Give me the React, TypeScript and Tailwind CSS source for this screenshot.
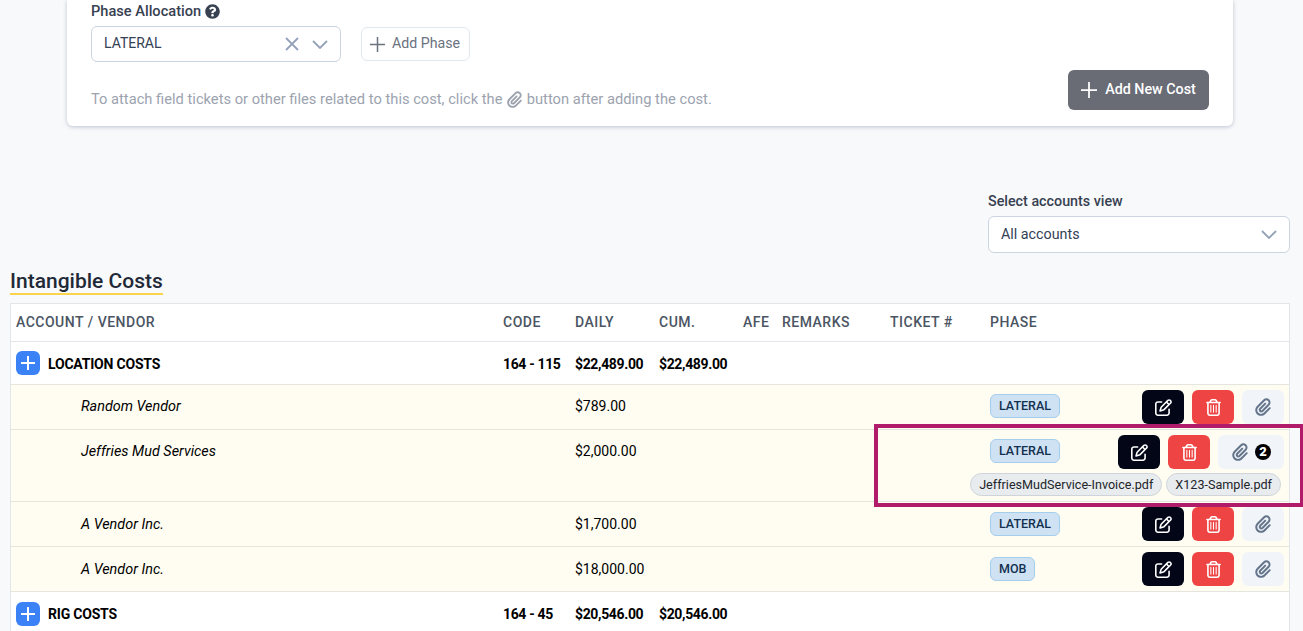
import React from "react";
import { FaQuestionCircle } from "react-icons/fa";
import { FaPaperclip, FaRegPenToSquare, FaRegTrashCan } from "react-icons/fa6";

const PlusI = ({ s = 16, w = 2 }: { s?: number; w?: number }) => (
  <svg width={s} height={s} viewBox={`0 0 ${s} ${s}`} fill="none" stroke="currentColor" strokeWidth={w}>
    <path d={`M${s / 2} 0V${s}M0 ${s / 2}H${s}`} />
  </svg>
);
const Chevron = () => (
  <svg width="16" height="9" viewBox="0 0 16 9" fill="none" stroke="#94a3b8" strokeWidth="1.8">
    <path d="M1 1l7 7 7-7" />
  </svg>
);
const Cross = () => (
  <svg width="14" height="14" viewBox="0 0 14 14" fill="none" stroke="#94a3b8" strokeWidth="1.8">
    <path d="M1 1l12 12M13 1L1 13" />
  </svg>
);

const Actions = ({ count }: { count?: number }) => (
  <div className="flex justify-end gap-2">
    <button className="flex h-[34px] w-[42px] items-center justify-center rounded-md bg-[#020617] text-white">
      <FaRegPenToSquare size={17} />
    </button>
    <button className="flex h-[34px] w-[42px] items-center justify-center rounded-md bg-[#ef4444] text-white">
      <FaRegTrashCan size={17} />
    </button>
    <button className={`flex h-[34px] items-center justify-center gap-[6px] rounded-md bg-[#f1f5f9] text-[#64748b] ${count ? "w-[66px]" : "w-[42px]"}`}>
      <FaPaperclip size={18} />
      {count ? (
        <span className="flex h-4 w-4 items-center justify-center rounded-full bg-black text-[13px] font-black text-white">{count}</span>
      ) : null}
    </button>
  </div>
);

const Badge = ({ children }: { children: React.ReactNode }) => (
  <span className="inline-block rounded-md border border-[#a5cdec] bg-[#cfe2f3] px-[8px] py-[1px] text-[12.5px] leading-[20px] font-medium text-[#12304f]">
    {children}
  </span>
);

const Vendor = ({ name, daily, phase, h, count, files, top = "pt-[11px]", badgeTop = "pt-[4px]" }: { name: string; daily: string; phase: string; h: string; count?: number; files?: string[]; top?: string; badgeTop?: string }) => (
  <div className={`flex border-b border-[#e5e5e0] bg-[#fffdf1] text-[14px] text-black ${h}`}>
    <div className={`w-[564px] shrink-0 pl-[70px] text-[14.4px] leading-[22px] italic ${top}`}>{name}</div>
    <div className={`w-[415px] shrink-0 leading-[20px] ${top}`}>{daily}</div>
    <div className="min-w-0 flex-1 pr-[5px]">
      <div className="flex items-start pt-[5px]">
        <div className={badgeTop}><Badge>{phase}</Badge></div>
        <div className="flex-1"><Actions count={count} /></div>
      </div>
      {files ? (
        <div className="mt-[4px] mr-[3px] -ml-[40px] flex justify-end gap-1 whitespace-nowrap">
          {files.map((f) => (
            <span key={f} className="rounded-full border border-[#ced4da] bg-[#e9ecef] px-2 text-[12.6px] leading-[21px] text-[#212529]">{f}</span>
          ))}
        </div>
      ) : null}
    </div>
  </div>
);

const Group = ({ name, code, daily, cum, h, nudge = "pt-[2px]" }: { name: string; code: string; daily: string; cum: string; h: string; nudge?: string }) => (
  <div className={`flex items-center border-b border-[#e5e5e0] bg-white text-[14px] font-bold text-black ${h}`}>
    <div className="flex w-[492px] shrink-0 items-center gap-2 pl-[5px]">
      <span className="flex h-6 w-6 items-center justify-center rounded-md bg-[#3b82f6] text-white"><PlusI s={14} w={2} /></span>
      <span className={`tracking-[-0.2px] ${nudge}`}>{name}</span>
    </div>
    <div className={`w-[72px] shrink-0 tracking-[-0.35px] ${nudge}`}>{code}</div>
    <div className={`w-[84px] shrink-0 tracking-[-0.35px] ${nudge}`}>{daily}</div>
    <div className={`tracking-[-0.35px] ${nudge}`}>{cum}</div>
  </div>
);

export default function App() {
  return (
    <div className="relative h-[631px] overflow-hidden bg-[#f8f9fb] font-['Roboto',sans-serif]">
      <div className="ml-[67px] mr-[70px] flex h-[126px] flex-col rounded-b-md bg-white px-6 shadow-[0_1px_4px_rgba(100,116,139,0.4)]">
        <div className="mt-[2px] flex items-center gap-1 text-[14.6px] leading-[18px] font-medium text-[#374151]">
          Phase Allocation <FaQuestionCircle size={15} className="text-[#374151]" />
        </div>
        <div className="mt-[6px] flex items-center gap-5">
          <div className="flex h-9 w-[250px] items-center rounded-md border border-[#cbd5e1] pl-3 pr-3 text-[14px] leading-[32px] text-[#334155]">
            <span className="-mt-[2px] flex-1">LATERAL</span>
            <Cross />
            <span className="ml-[13px]"><Chevron /></span>
          </div>
          <div className="flex h-[34px] w-[109px] items-center gap-[7px] rounded-md border border-[#e2e8f0] pl-[8px] text-[14.2px] text-[#6b7280]">
            <PlusI s={15} w={1.5} />
            Add Phase
          </div>
        </div>
        <div className="mt-2 flex items-start justify-between">
          <div className="mt-[19px] flex items-center text-[14.7px] leading-5 text-[#9ca3af]">
            To attach field tickets or other files related to this cost, click the&nbsp;<FaPaperclip size={17} />&nbsp;button after adding the cost.
          </div>
          <button className="flex h-10 w-[141px] items-center justify-center gap-2 rounded-md bg-[#696b75] text-[14.3px] font-medium text-white">
            <PlusI s={16} w={1.75} />
            Add New Cost
          </button>
        </div>
      </div>

      <div className="mt-[66px] ml-auto mr-[13px] w-[302px]">
        <div className="text-[14.3px] leading-[18px] font-medium text-[#374151]">Select accounts view</div>
        <div className="mt-[6px] flex h-[37px] items-center rounded-md border border-[#cbd5e1] bg-white pl-3 pr-3 text-[14.3px] text-[#334155]">
          <span className="flex-1">All accounts</span>
          <Chevron />
        </div>
      </div>

      <div className="mt-[16px] ml-[10px] inline-block border-b-2 border-[#fcd34d] text-[21px] leading-[24px] font-medium text-[#1f2937]">Intangible Costs</div>

      <div className="ml-[10px] mr-[13px] mt-[8px] border-x border-t border-[#e2e5ea] bg-white">
        <div className="flex h-[38px] items-center border-b border-[#e2e5ea] text-[14px] font-medium tracking-[0.5px] text-[#4b5563]">
          <div className="w-[492px] shrink-0 pl-[5px]">ACCOUNT / VENDOR</div>
          <div className="w-[72px] shrink-0">CODE</div>
          <div className="w-[84px] shrink-0">DAILY</div>
          <div className="w-[84px] shrink-0">CUM.</div>
          <div className="w-[39px] shrink-0">AFE</div>
          <div className="w-[108px] shrink-0">REMARKS</div>
          <div className="w-[100px] shrink-0">TICKET #</div>
          <div>PHASE</div>
        </div>
        <Group name="LOCATION COSTS" code="164 - 115" daily="$22,489.00" cum="$22,489.00" h="h-[43px]" />
        <Vendor name="Random Vendor" daily="$789.00" phase="LATERAL" h="h-[45px]" />
        <Vendor name="Jeffries Mud Services" daily="$2,000.00" phase="LATERAL" h="h-[72px]" count={2} files={["JeffriesMudService-Invoice.pdf", "X123-Sample.pdf"]} />
        <Vendor name="A Vendor Inc." daily="$1,700.00" phase="LATERAL" h="h-[45px]" top="pt-[12px]" badgeTop="pt-[5px]" />
        <Vendor name="A Vendor Inc." daily="$18,000.00" phase="MOB" h="h-[45px]" top="pt-[12px]" badgeTop="pt-[5px]" />
        <Group name="RIG COSTS" code="164 - 45" daily="$20,546.00" cum="$20,546.00" h="h-[45px]" nudge="pt-0" />
      </div>

      <div className="pointer-events-none absolute left-[874px] top-[424px] h-[83px] w-[430px] border-[4px] border-[#b01b6a]" />
    </div>
  );
}
